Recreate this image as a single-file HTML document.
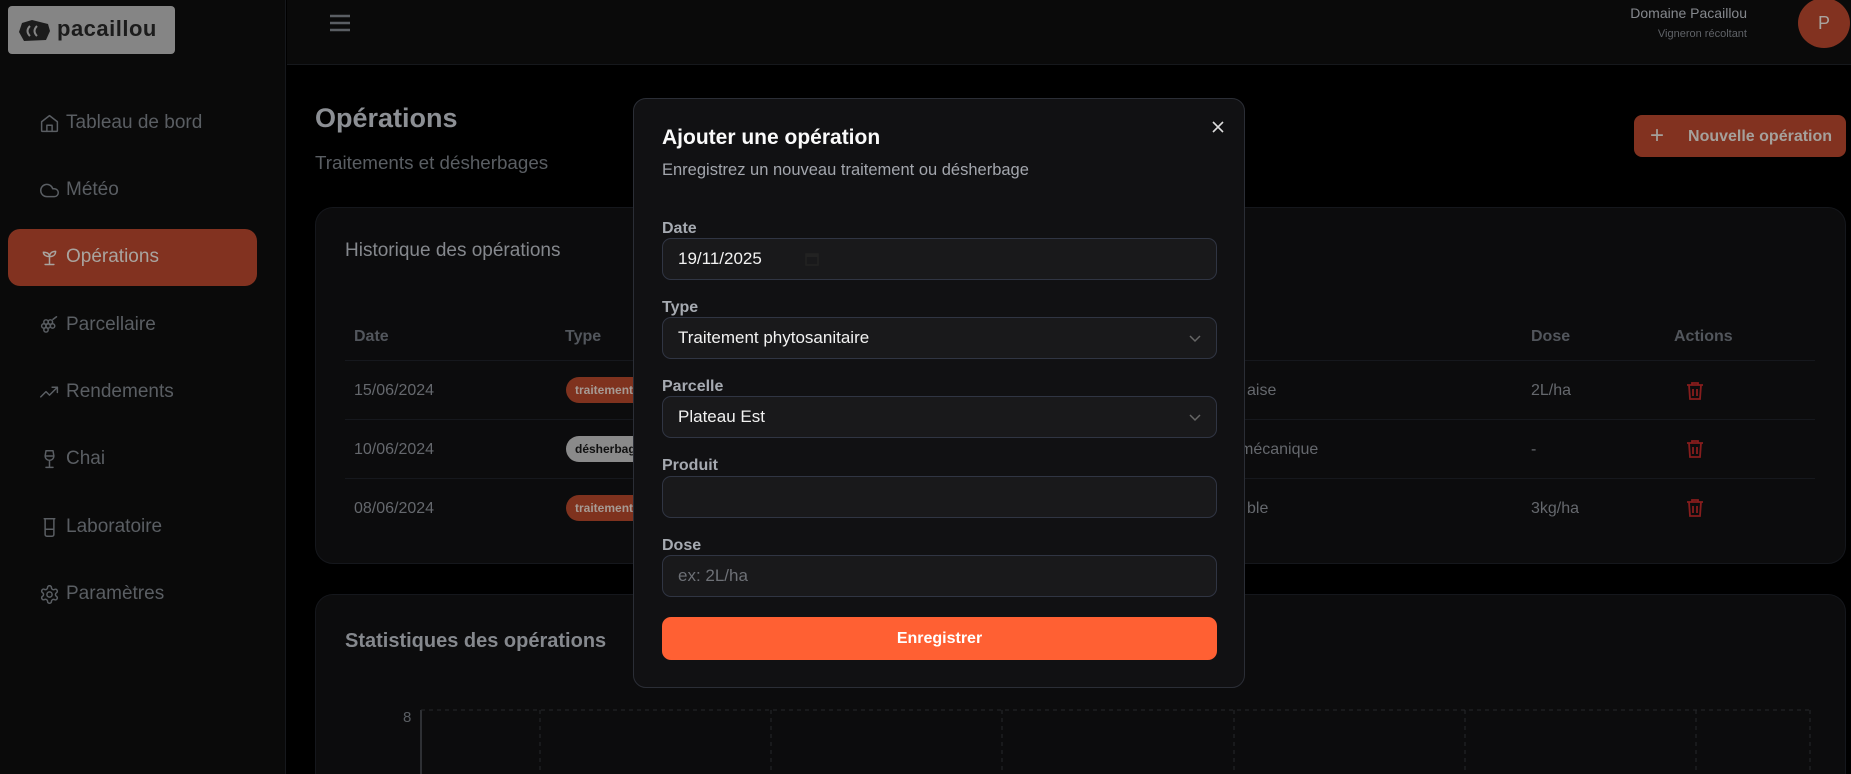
<!DOCTYPE html>
<html><head><meta charset="utf-8"><style>
*{box-sizing:border-box;margin:0;padding:0}
html,body{width:1851px;height:774px;overflow:hidden}
body{background:#000;font-family:"Liberation Sans",sans-serif;position:relative}
.a{position:absolute}
.side{left:0;top:0;width:286px;height:774px;background:#0a0a0a;border-right:1px solid #16181c}
.nav{left:39px;font-size:19px;color:#5a5e63;display:flex;align-items:center}
.nav svg{width:21px;height:21px;margin-right:6px;stroke:#5a5e63;fill:none;stroke-width:1.7;stroke-linecap:round;stroke-linejoin:round}
.card{background:#0c0c0d;border:1px solid #15171c;border-radius:18px}
.th{font-size:16px;color:#52565c;font-weight:bold;top:328px}
.td{font-size:16px;color:#65686d}
.line{height:1px;background:#16181d;left:345px;width:1470px}
.badge{height:26px;border-radius:13px;font-size:12px;font-weight:bold;padding:6px 9px;left:566px;overflow:hidden;width:80px;white-space:nowrap}
.trash{left:1686px;width:18px;height:20px;stroke:#861d1d;fill:none;stroke-width:1.8}
.modal{left:633px;top:98px;width:612px;height:590px;background:#111113;border:1px solid #2b2e36;border-radius:13px}
.lab{left:28px;font-size:16px;font-weight:bold;color:#a6aab1}
.inp{left:28px;width:555px;height:42px;background:#19191b;border:1px solid #303543;border-radius:9px;font-size:17px;color:#f2f2f2;padding:10px 15px}
.chev{right:14px;top:13px;width:14px;height:14px;stroke:#666;fill:none;stroke-width:1.5}
</style></head><body>
<div class="a side"></div>
<div class="a" style="left:8px;top:6px;width:167px;height:48px;background:#858585;border-radius:4px"></div>
<svg class="a" style="left:18px;top:20px" width="34" height="22" viewBox="0 0 34 22"><path d="M4 3 L14 0 L30 4 L32 11 L28 20 L6 21 L1 12 Z" fill="#1c1c1c"/><path d="M12 6 Q7 11 12 16 M19 6 Q14 11 19 16" stroke="#858585" stroke-width="2" fill="none"/></svg>
<div class="a" style="left:57px;top:16px;font-size:22px;font-weight:bold;color:#1c1c1c;letter-spacing:0.5px">pacaillou</div>
<div class="a" style="left:8px;top:229px;width:249px;height:57px;background:#823220;border-radius:12px"></div>
<div class="a nav" style="top:112px"><svg viewBox="0 0 24 24"><path d="M3 10l9-7 9 7v10a1 1 0 0 1-1 1H4a1 1 0 0 1-1-1z"/><path d="M9 21v-7h6v7"/></svg>Tableau de bord</div>
<div class="a nav" style="top:179px"><svg viewBox="0 0 24 24"><path d="M17.5 19H9a7 7 0 1 1 6.7-9h1.8a4.5 4.5 0 1 1 0 9z"/></svg>Météo</div>
<div class="a nav" style="top:246px;color:#a9a49f"><svg viewBox="0 0 24 24" style="stroke:#a9a49f"><path d="M7 20h10M12 20v-9M12 11c0-3 2-6 7-6 0 4-3 6-7 6zM12 11C12 8 10 6 5 6c0 3 3 5 7 5"/></svg>Opérations</div>
<div class="a nav" style="top:314px"><svg viewBox="0 0 24 24"><circle cx="8" cy="8" r="2.5"/><circle cx="13" cy="8" r="2.5"/><circle cx="10.5" cy="12.5" r="2.5"/><circle cx="5.5" cy="12.5" r="2.5"/><circle cx="8" cy="17" r="2.5"/><circle cx="15.5" cy="12.5" r="2.5"/><path d="M16 5l4-3"/></svg>Parcellaire</div>
<div class="a nav" style="top:381px"><svg viewBox="0 0 24 24"><path d="M2 17l6-6 4 4 9-9M15 6h6v6"/></svg>Rendements</div>
<div class="a nav" style="top:448px"><svg viewBox="0 0 24 24"><path d="M8 2h8l1 6a5 5 0 0 1-10 0zM12 13v8M8 21h8M7.5 8h9"/></svg>Chai</div>
<div class="a nav" style="top:516px"><svg viewBox="0 0 24 24"><path d="M6 2h12M7 2v18a2 2 0 0 0 2 2h6a2 2 0 0 0 2-2V2M7 14h10"/></svg>Laboratoire</div>
<div class="a nav" style="top:583px"><svg viewBox="0 0 24 24"><circle cx="12" cy="12" r="3"/><path d="M12.2 2h-.4a2 2 0 0 0-2 2v.2a2 2 0 0 1-1 1.7l-.4.3a2 2 0 0 1-2 0l-.2-.1a2 2 0 0 0-2.7.7l-.2.4a2 2 0 0 0 .7 2.7l.2.1a2 2 0 0 1 1 1.7v.5a2 2 0 0 1-1 1.7l-.2.1a2 2 0 0 0-.7 2.7l.2.4a2 2 0 0 0 2.7.7l.2-.1a2 2 0 0 1 2 0l.4.3a2 2 0 0 1 1 1.7V20a2 2 0 0 0 2 2h.4a2 2 0 0 0 2-2v-.2a2 2 0 0 1 1-1.7l.4-.3a2 2 0 0 1 2 0l.2.1a2 2 0 0 0 2.7-.7l.2-.4a2 2 0 0 0-.7-2.7l-.2-.1a2 2 0 0 1-1-1.7v-.5a2 2 0 0 1 1-1.7l.2-.1a2 2 0 0 0 .7-2.7l-.2-.4a2 2 0 0 0-2.7-.7l-.2.1a2 2 0 0 1-2 0l-.4-.3a2 2 0 0 1-1-1.7V4a2 2 0 0 0-2-2z"/></svg>Paramètres</div>

<div class="a" style="left:287px;top:0;width:1564px;height:65px;background:#0a0a0a;border-bottom:1px solid #16181c"></div>
<svg class="a" style="left:329px;top:13px" width="22" height="20"><path d="M1 3h20M1 10h20M1 17h20" stroke="#5a5e63" stroke-width="2.4"/></svg>
<div class="a" style="right:104px;top:5px;font-size:14px;color:#85888d;text-align:right">Domaine Pacaillou</div>
<div class="a" style="right:104px;top:28px;font-size:11px;color:#5f6267;text-align:right">Vigneron récoltant</div>
<div class="a" style="left:1798px;top:-2px;width:52px;height:50px;border-radius:50%;background:#823220;color:#a9a49f;font-size:18px;text-align:center;line-height:50px">P</div>

<div class="a" style="left:315px;top:103px;font-size:27px;font-weight:bold;color:#8c8f94">Opérations</div>
<div class="a" style="left:315px;top:152px;font-size:18.8px;color:#5a5e63">Traitements et désherbages</div>
<div class="a" style="left:1634px;top:115px;width:212px;height:42px;background:#823220;border-radius:8px;color:#a5a09b;font-size:16px;font-weight:bold;line-height:42px;padding-left:16px"><span style="font-weight:normal;font-size:24px;vertical-align:-2px;margin-right:24px">+</span>Nouvelle opération</div>

<div class="a card" style="left:315px;top:207px;width:1531px;height:357px"></div>
<div class="a" style="left:345px;top:240px;font-size:19px;color:#85888d">Historique des opérations</div>
<div class="a th" style="left:354px">Date</div><div class="a th" style="left:565px">Type</div><div class="a th" style="left:1531px">Dose</div><div class="a th" style="left:1674px">Actions</div>
<div class="a line" style="top:360px"></div><div class="a line" style="top:419px"></div><div class="a line" style="top:478px"></div>
<div class="a td" style="left:354px;top:382px">15/06/2024</div>
<div class="a td" style="left:354px;top:441px">10/06/2024</div>
<div class="a td" style="left:354px;top:500px">08/06/2024</div>
<div class="a badge" style="top:377px;background:#7f321e;color:#a69a94">traitement</div>
<div class="a badge" style="top:436px;background:#8a8a8a;color:#111">désherbage</div>
<div class="a badge" style="top:495px;background:#7f321e;color:#a69a94">traitement</div>
<div class="a td" style="left:1247px;top:382px">aise</div>
<div class="a td" style="left:1240px;top:441px">mécanique</div>
<div class="a td" style="left:1247px;top:500px">ble</div>
<div class="a td" style="left:1531px;top:382px">2L/ha</div>
<div class="a td" style="left:1531px;top:441px">-</div>
<div class="a td" style="left:1531px;top:500px">3kg/ha</div>
<svg class="a trash" style="top:381px" viewBox="0 0 18 20"><path d="M1 4h16M6 4V2h6v2M3 4l1 14h10l1-14M7 8v7M11 8v7"/></svg>
<svg class="a trash" style="top:439px" viewBox="0 0 18 20"><path d="M1 4h16M6 4V2h6v2M3 4l1 14h10l1-14M7 8v7M11 8v7"/></svg>
<svg class="a trash" style="top:498px" viewBox="0 0 18 20"><path d="M1 4h16M6 4V2h6v2M3 4l1 14h10l1-14M7 8v7M11 8v7"/></svg>

<div class="a card" style="left:315px;top:594px;width:1531px;height:200px"></div>
<div class="a" style="left:345px;top:630px;font-size:20px;font-weight:bold;color:#85888d">Statistiques des opérations</div>
<div class="a" style="left:403px;top:709px;font-size:15px;color:#5a5e63">8</div>
<svg class="a" style="left:415px;top:705px" width="1400" height="69"><path d="M6 5V69" stroke="#3a3d42" stroke-width="1.5"/><path d="M6 5H1395M125 5V69M356 5V69M587 5V69M819 5V69M1050 5V69M1281 5V69M1395 5V69" stroke="#26282c" stroke-dasharray="4 4"/></svg>

<div class="a modal">
<div class="a" style="left:28px;top:27px;font-size:21px;font-weight:bold;color:#fafafa">Ajouter une opération</div>
<div class="a" style="left:28px;top:62px;font-size:16.5px;color:#a3a6ad">Enregistrez un nouveau traitement ou désherbage</div>
<svg class="a" style="left:577px;top:21px" width="14" height="14"><path d="M2 2l10 10M12 2L2 12" stroke="#ddd" stroke-width="1.6"/></svg>
<div class="a lab" style="top:121px">Date</div>
<div class="a inp" style="top:139px">19/11/2025<svg class="a" style="left:142px;top:13px" width="14" height="14"><rect x="1" y="2" width="12" height="11" fill="none" stroke="#222" stroke-width="1.5"/><rect x="1" y="2" width="12" height="3" fill="#222"/></svg></div>
<div class="a lab" style="top:200px">Type</div>
<div class="a inp" style="top:218px">Traitement phytosanitaire<svg class="a chev" viewBox="0 0 14 14"><path d="M2 5l5 5 5-5"/></svg></div>
<div class="a lab" style="top:279px">Parcelle</div>
<div class="a inp" style="top:297px">Plateau Est<svg class="a chev" viewBox="0 0 14 14"><path d="M2 5l5 5 5-5"/></svg></div>
<div class="a lab" style="top:358px">Produit</div>
<div class="a inp" style="top:377px"></div>
<div class="a lab" style="top:438px">Dose</div>
<div class="a inp" style="top:456px;color:#6d7076">ex: 2L/ha</div>
<div class="a" style="left:28px;top:518px;width:555px;height:43px;background:#ff6033;border-radius:9px;color:#fff;font-size:16px;font-weight:bold;text-align:center;line-height:43px">Enregistrer</div>
</div>
</body></html>
